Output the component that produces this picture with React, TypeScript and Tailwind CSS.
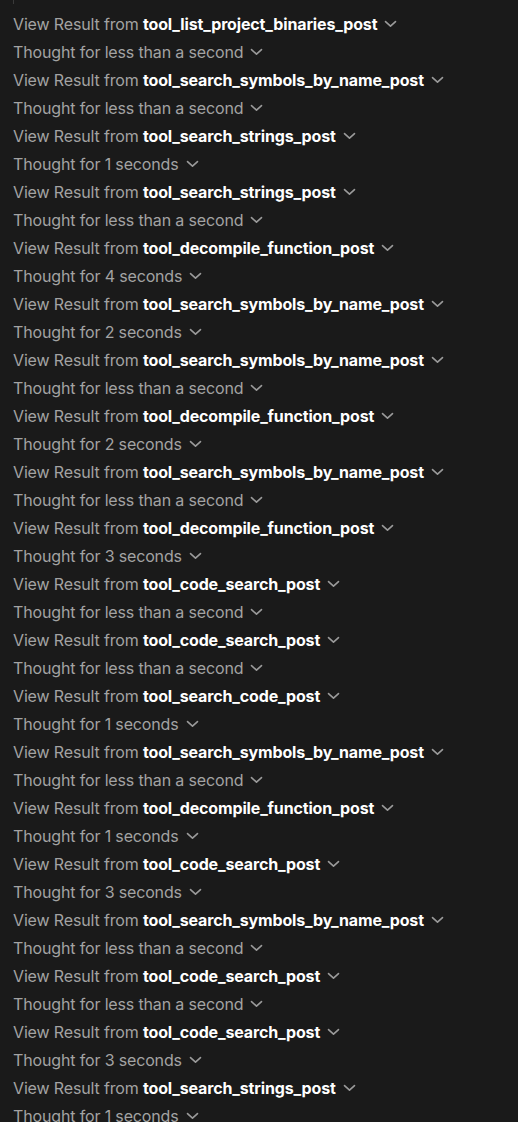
import React from 'react';

// 도구 호출 로그 항목
type Row = { kind: 'view'; tool: string } | { kind: 'thought'; text: string };

const LESS = 'less than a second';

const rows: Row[] = [
    { kind: 'view', tool: 'tool_list_project_binaries_post' },
    { kind: 'thought', text: LESS },
    { kind: 'view', tool: 'tool_search_symbols_by_name_post' },
    { kind: 'thought', text: LESS },
    { kind: 'view', tool: 'tool_search_strings_post' },
    { kind: 'thought', text: '1 seconds' },
    { kind: 'view', tool: 'tool_search_strings_post' },
    { kind: 'thought', text: LESS },
    { kind: 'view', tool: 'tool_decompile_function_post' },
    { kind: 'thought', text: '4 seconds' },
    { kind: 'view', tool: 'tool_search_symbols_by_name_post' },
    { kind: 'thought', text: '2 seconds' },
    { kind: 'view', tool: 'tool_search_symbols_by_name_post' },
    { kind: 'thought', text: LESS },
    { kind: 'view', tool: 'tool_decompile_function_post' },
    { kind: 'thought', text: '2 seconds' },
    { kind: 'view', tool: 'tool_search_symbols_by_name_post' },
    { kind: 'thought', text: LESS },
    { kind: 'view', tool: 'tool_decompile_function_post' },
    { kind: 'thought', text: '3 seconds' },
    { kind: 'view', tool: 'tool_code_search_post' },
    { kind: 'thought', text: LESS },
    { kind: 'view', tool: 'tool_code_search_post' },
    { kind: 'thought', text: LESS },
    { kind: 'view', tool: 'tool_search_code_post' },
    { kind: 'thought', text: '1 seconds' },
    { kind: 'view', tool: 'tool_search_symbols_by_name_post' },
    { kind: 'thought', text: LESS },
    { kind: 'view', tool: 'tool_decompile_function_post' },
    { kind: 'thought', text: '1 seconds' },
    { kind: 'view', tool: 'tool_code_search_post' },
    { kind: 'thought', text: '3 seconds' },
    { kind: 'view', tool: 'tool_search_symbols_by_name_post' },
    { kind: 'thought', text: LESS },
    { kind: 'view', tool: 'tool_code_search_post' },
    { kind: 'thought', text: LESS },
    { kind: 'view', tool: 'tool_code_search_post' },
    { kind: 'thought', text: '3 seconds' },
    { kind: 'view', tool: 'tool_search_strings_post' },
    { kind: 'thought', text: '1 seconds' },
];

const Chevron = () => (
    <svg width="13" height="8" viewBox="0 0 13 8" fill="none" className="shrink-0">
        <path d="M1.5 1.6 L6.5 6.2 L11.5 1.6" stroke="#9a9a9a" strokeWidth="1.6" strokeLinecap="round" strokeLinejoin="round" />
    </svg>
);

const App = () => {
    return (
        <div
            className="h-[1122px] w-[518px] overflow-hidden bg-[#1a1a1a] px-[13px]"
            style={{ fontFamily: 'Inter, "Noto Sans", sans-serif' }}
        >
            {/* 위쪽 잘린 구분선 */}
            <div className="h-[4px] w-px bg-[#3a3a3a]" />
            <div className="pt-[6px]">
                {rows.map((row, i) => (
                    <div key={i} className="flex h-[28px] items-center gap-[7px] text-[16px] tracking-[-0.15px] whitespace-nowrap">
                        {row.kind === 'view' ? (
                            <span className="text-[#a3a3a3]">
                                View Result from <span className="font-bold text-white">{row.tool}</span>
                            </span>
                        ) : (
                            <span className="text-[#a3a3a3]">Thought for {row.text}</span>
                        )}
                        <Chevron />
                    </div>
                ))}
            </div>
        </div>
    );
};

export default App;
